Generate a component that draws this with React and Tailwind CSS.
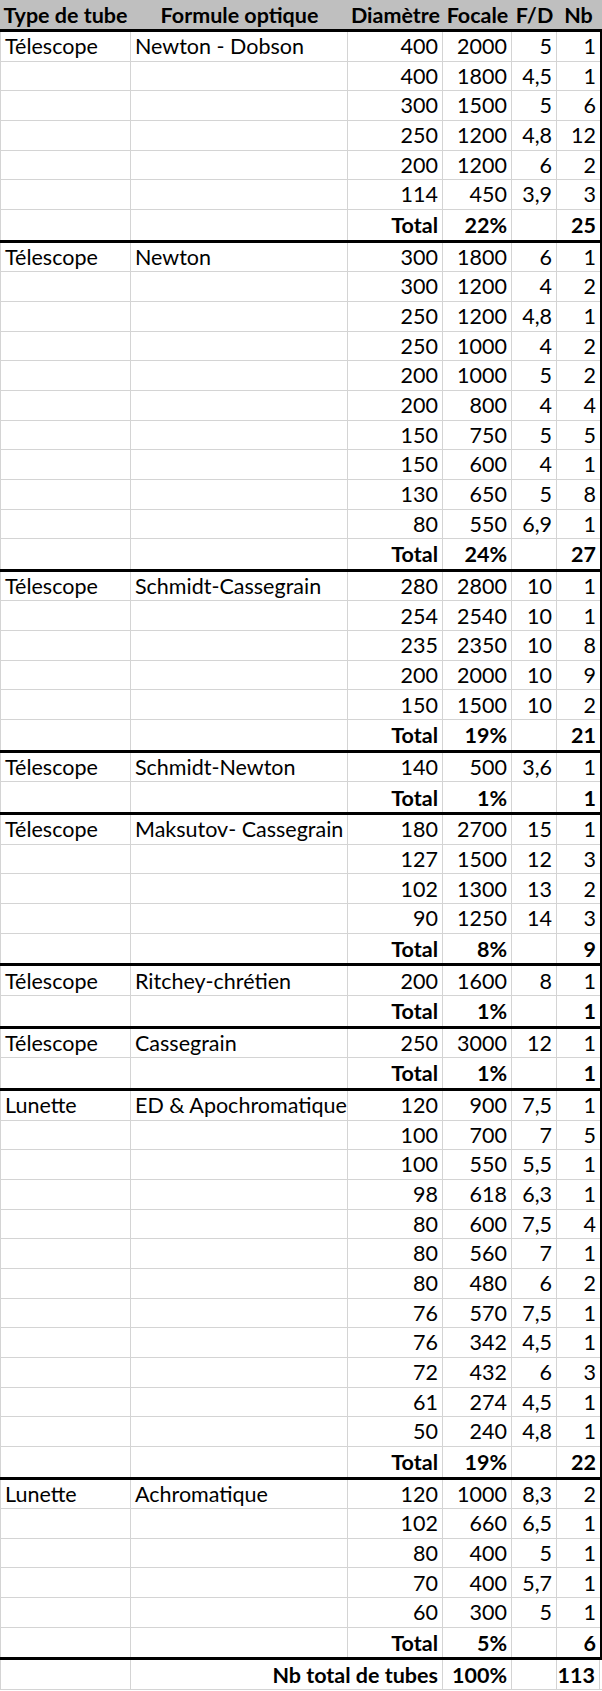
const GROUPS = [
  {
    type: "Télescope", formule: "Newton - Dobson", pct: "22%", nb: 25,
    rows: [["400", "2000", "5", "1"], ["400", "1800", "4,5", "1"], ["300", "1500", "5", "6"], ["250", "1200", "4,8", "12"], ["200", "1200", "6", "2"], ["114", "450", "3,9", "3"]],
  },
  {
    type: "Télescope", formule: "Newton", pct: "24%", nb: 27,
    rows: [["300", "1800", "6", "1"], ["300", "1200", "4", "2"], ["250", "1200", "4,8", "1"], ["250", "1000", "4", "2"], ["200", "1000", "5", "2"], ["200", "800", "4", "4"], ["150", "750", "5", "5"], ["150", "600", "4", "1"], ["130", "650", "5", "8"], ["80", "550", "6,9", "1"]],
  },
  {
    type: "Télescope", formule: "Schmidt-Cassegrain", pct: "19%", nb: 21,
    rows: [["280", "2800", "10", "1"], ["254", "2540", "10", "1"], ["235", "2350", "10", "8"], ["200", "2000", "10", "9"], ["150", "1500", "10", "2"]],
  },
  { type: "Télescope", formule: "Schmidt-Newton", pct: "1%", nb: 1, rows: [["140", "500", "3,6", "1"]] },
  {
    type: "Télescope", formule: "Maksutov- Cassegrain", pct: "8%", nb: 9,
    rows: [["180", "2700", "15", "1"], ["127", "1500", "12", "3"], ["102", "1300", "13", "2"], ["90", "1250", "14", "3"]],
  },
  { type: "Télescope", formule: "Ritchey-chrétien", pct: "1%", nb: 1, rows: [["200", "1600", "8", "1"]] },
  { type: "Télescope", formule: "Cassegrain", pct: "1%", nb: 1, rows: [["250", "3000", "12", "1"]] },
  {
    type: "Lunette", formule: "ED & Apochromatique", pct: "19%", nb: 22,
    rows: [["120", "900", "7,5", "1"], ["100", "700", "7", "5"], ["100", "550", "5,5", "1"], ["98", "618", "6,3", "1"], ["80", "600", "7,5", "4"], ["80", "560", "7", "1"], ["80", "480", "6", "2"], ["76", "570", "7,5", "1"], ["76", "342", "4,5", "1"], ["72", "432", "6", "3"], ["61", "274", "4,5", "1"], ["50", "240", "4,8", "1"]],
  },
  {
    type: "Lunette", formule: "Achromatique", pct: "5%", nb: 6,
    rows: [["120", "1000", "8,3", "2"], ["102", "660", "6,5", "1"], ["80", "400", "5", "1"], ["70", "400", "5,7", "1"], ["60", "300", "5", "1"]],
  },
];

const COLS = "grid grid-cols-[131px_217px_95px_69px_45px_43px]";
const cell = "flex items-end pb-[3px] border-r border-[#d4d4d4] overflow-visible whitespace-nowrap";
const left = cell + " pl-[4px]";
const right = cell + " justify-end pr-[4px]";

function Row({ cells, last }) {
  return (
    <div className={`${COLS} h-[29.67px] ${last ? "" : "border-b border-[#d4d4d4]"}`}>
      <div className={left + " border-l"}>{cells[0]}</div>
      <div className={left}>{cells[1]}</div>
      <div className={right}>{cells[2]}</div>
      <div className={right}>{cells[3]}</div>
      <div className={right}>{cells[4]}</div>
      <div className={right + " border-r-0"}>{cells[5]}</div>
    </div>
  );
}

function Group({ g }) {
  return (
    <div className="border-t-[3px] border-r-2 border-black w-[602px]">
      {g.rows.map((r, i) => (
        <Row key={i} cells={[i === 0 ? g.type : "", i === 0 ? g.formule : "", ...r]} />
      ))}
      <Row
        last
        cells={["", "", <b className="font-bold">Total</b>, <b className="font-bold">{g.pct}</b>, "", <b className="font-bold">{g.nb}</b>]}
      />
    </div>
  );
}

export default function App() {
  return (
    <div className="w-[602px] h-[1691px] bg-white text-black text-[21.5px] leading-none overflow-hidden" style={{ fontFamily: "Lato, 'Open Sans', sans-serif" }}>
      {/* en-tête */}
      <div className={`${COLS} h-[29px] bg-[#bfbfbf] font-bold`}>
        <div className="flex items-end justify-center pb-[3px] whitespace-nowrap">Type de tube</div>
        <div className="flex items-end justify-center pb-[3px] whitespace-nowrap">Formule optique</div>
        <div className="flex items-end justify-center pb-[3px] whitespace-nowrap">Diamètre</div>
        <div className="flex items-end justify-center pb-[3px] whitespace-nowrap">Focale</div>
        <div className="flex items-end justify-center pb-[3px] whitespace-nowrap">F/D</div>
        <div className="flex items-end justify-center pb-[3px] whitespace-nowrap">Nb</div>
      </div>

      {GROUPS.map((g, i) => <Group key={i} g={g} />)}

      {/* total général */}
      <div className={`${COLS} h-[32.67px] border-t-[3px] border-b border-t-black border-b-[#d4d4d4]`}>
        <div className={left + " border-l"}></div>
        <div className={right + " col-span-2 font-bold"}>Nb total de tubes</div>
        <div className={right + " font-bold"}>100%</div>
        <div className={right}></div>
        <div className={right + " font-bold"}>113</div>
      </div>
    </div>
  );
}
